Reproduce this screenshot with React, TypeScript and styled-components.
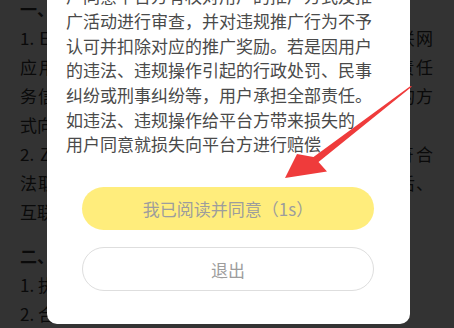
import React from "react";
import styled, { createGlobalStyle } from "styled-components";

const GlobalStyle = createGlobalStyle`
  html, body {
    margin: 0;
    padding: 0;
    background: #ffffff;
    overflow: hidden;
  }
  body {
    font-family: "Noto Sans CJK SC", "Noto Sans", sans-serif;
  }
`;

const Page = styled.div`
  position: relative;
  width: 454px;
  height: 328px;
  overflow: hidden;
  background: #ffffff;
`;

const Article = styled.article`
  margin-top: -6px;
  padding: 0 21px 0 20px;
  font-size: 17px;
  line-height: 29px;
  color: #333333;
`;

const ArticleLine = styled.div<{ $justify?: boolean; $bold?: boolean; $gapBefore?: boolean }>`
  white-space: nowrap;
  text-align: ${(p) => (p.$justify ? "justify" : "left")};
  text-align-last: ${(p) => (p.$justify ? "justify" : "left")};
  font-weight: ${(p) => (p.$bold ? 700 : 400)};
  margin-top: ${(p) => (p.$gapBefore ? "15px" : "0")};
`;

const Mask = styled.div`
  position: absolute;
  inset: 0;
  background: rgba(0, 0, 0, 0.8);
  display: flex;
  align-items: flex-end;
  padding: 0 44px 4px 47px;
`;

const Dialog = styled.section`
  flex: 1;
  background: #ffffff;
  border-radius: 10px;
  display: flex;
  flex-direction: column;
`;

const Terms = styled.div`
  padding: 0 19px;
  font-size: 17px;
  line-height: 24.65px;
  color: #4a4a4a;
  margin-bottom: 30px;
`;

const TermsLine = styled.div`
  white-space: nowrap;
`;

const Actions = styled.div`
  display: flex;
  flex-direction: column;
  gap: 17px;
  padding: 0 36px 33px 35px;
`;

const PillButton = styled.button<{ $variant: "agree" | "exit" }>`
  height: ${(p) => (p.$variant === "agree" ? "43px" : "44px")};
  border-radius: 22px;
  font-family: "Noto Sans CJK SC", "Noto Sans", sans-serif;
  font-size: 17px;
  color: #9d9d9d;
  background: ${(p) => (p.$variant === "agree" ? "#ffed7c" : "#ffffff")};
  border: ${(p) => (p.$variant === "agree" ? "none" : "1px solid #dedede")};
  display: flex;
  align-items: center;
  justify-content: center;
  padding: 0;
  cursor: pointer;
`;

const ArrowLayer = styled.svg`
  position: absolute;
  left: 0;
  top: 0;
  width: 454px;
  height: 328px;
  pointer-events: none;
`;

const articleLines: { text: string; justify?: boolean; bold?: boolean; gap?: boolean }[] = [
  { text: "一、推广规则", bold: true },
  { text: "1. E推客是指通过平台推广商品并获取佣金的互联网", justify: true },
  { text: "应用用户，用户需遵守平台规则并承担相应的责任", justify: true },
  { text: "务信息推广时，应当以真实、合法、准确、有效的方", justify: true },
  { text: "式向他人进行推广。" },
  { text: "2. Z用户应当保证其推广行为及推广的内容均符合", justify: true },
  { text: "法取得推广资格，并在完成平台的实名身份认证后、", justify: true },
  { text: "互联网信息服务相关规定。" },
  { text: "二、推广奖励", bold: true, gap: true },
  { text: "1. 执行推广任务后，用户可获得相应的奖励" },
  { text: "2. 合作期间，平台有权根据情况调整奖励" },
];

const termsLines = [
  "户同意平台方有权对用户的推广方式及推",
  "广活动进行审查，并对违规推广行为不予",
  "认可并扣除对应的推广奖励。若是因用户",
  "的违法、违规操作引起的行政处罚、民事",
  "纠纷或刑事纠纷等，用户承担全部责任。",
  "如违法、违规操作给平台方带来损失的",
  "用户同意就损失向平台方进行赔偿",
];

export default function App() {
  return (
    <>
      <GlobalStyle />
      <Page>
        <Article>
          {articleLines.map((l, i) => (
            <ArticleLine key={i} $justify={l.justify} $bold={l.bold} $gapBefore={l.gap}>
              {l.text}
            </ArticleLine>
          ))}
        </Article>
        <Mask>
          <Dialog>
            <Terms>
              {termsLines.map((t, i) => (
                <TermsLine key={i}>{t}</TermsLine>
              ))}
            </Terms>
            <Actions>
              <PillButton $variant="agree">我已阅读并同意（1s）</PillButton>
              <PillButton $variant="exit">退出</PillButton>
            </Actions>
          </Dialog>
        </Mask>
        <ArrowLayer viewBox="0 0 454 328">
          <polygon
            points="412,86.5 318.5,162 327,171.5 285,178 297,154 313.5,157 410.5,86"
            fill="#ef3b3b"
          />
        </ArrowLayer>
      </Page>
    </>
  );
}
